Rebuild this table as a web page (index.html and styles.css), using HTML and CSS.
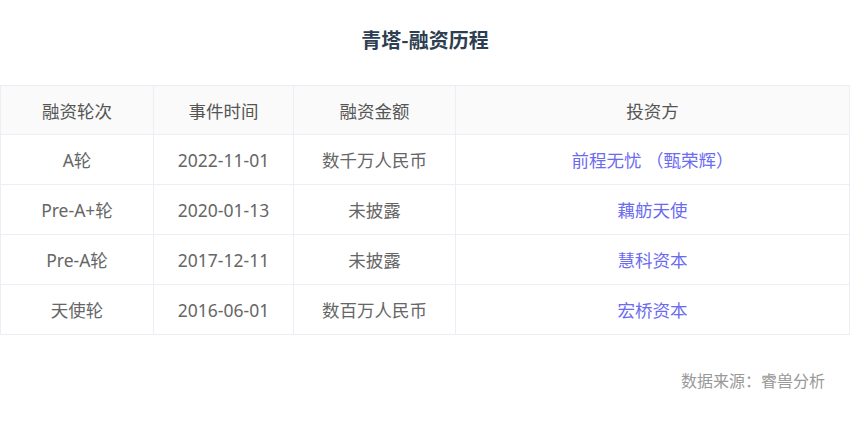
FILE: index.html
```html
<!DOCTYPE html>
<html lang="zh">
<head>
<meta charset="utf-8">
<link rel="stylesheet" href="styles.css">
</head>
<body>
<div class="page">
  <h1 class="title">青塔-融资历程</h1>
  <table class="fin-table">
    <colgroup>
      <col class="c1"><col class="c2"><col class="c3"><col class="c4">
    </colgroup>
    <thead>
      <tr><th>融资轮次</th><th>事件时间</th><th>融资金额</th><th>投资方</th></tr>
    </thead>
    <tbody>
      <tr><td>A轮</td><td>2022-11-01</td><td>数千万人民币</td><td class="inv">前程无忧 （甄荣辉）</td></tr>
      <tr><td>Pre-A+轮</td><td>2020-01-13</td><td>未披露</td><td class="inv">藕舫天使</td></tr>
      <tr><td>Pre-A轮</td><td>2017-12-11</td><td>未披露</td><td class="inv">慧科资本</td></tr>
      <tr><td>天使轮</td><td>2016-06-01</td><td>数百万人民币</td><td class="inv">宏桥资本</td></tr>
    </tbody>
  </table>
  <div class="source">数据来源：睿兽分析</div>
</div>
</body>
</html>
```
FILE: styles.css
```css
html, body {
  margin: 0;
  padding: 0;
  background: #fff;
}
body {
  font-family: "Noto Sans CJK SC", "Noto Sans", sans-serif;
}
.page {
  width: 850px;
}
.title {
  margin: 0;
  padding-top: 26px;
  height: 85px;
  box-sizing: border-box;
  text-align: center;
  font-size: 20px;
  line-height: 28px;
  font-weight: bold;
  color: #2c3e50;
}
.fin-table {
  width: 849px;
  border-collapse: collapse;
  table-layout: fixed;
}
.c1 { width: 153px; }
.c2 { width: 140px; }
.c3 { width: 162px; }
.c4 { width: 394px; }
.fin-table th,
.fin-table td {
  border: 1px solid #ebeef5;
  text-align: center;
  font-family: "Noto Sans", "Noto Sans CJK SC", sans-serif;
  font-size: 17.5px;
  font-weight: normal;
  color: #666;
  padding: 0;
}
.fin-table th {
  height: 48px;
  background: #fafafa;
  color: #555;
}
.fin-table td {
  height: 49px;
}
.fin-table td.inv {
  color: #6b6bf0;
}
.source {
  margin-top: 33px;
  padding-right: 25px;
  text-align: right;
  font-size: 16px;
  line-height: 24px;
  color: #999;
}
```
